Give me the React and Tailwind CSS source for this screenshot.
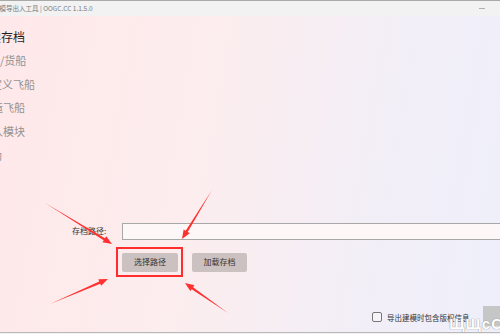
import React from "react";

const navItems = [
  { text: "读存档", active: true, ml: "-ml-[11px]" },
  { text: "客/货船", ml: "-ml-[11px]" },
  { text: "定义飞船", ml: "-ml-[9px]" },
  { text: "造飞船", ml: "-ml-[8px]" },
  { text: "入模块", ml: "-ml-[8px]" },
  { text: "助", ml: "-ml-[9px]" },
];

const arrows = [
  [45, 203, 112, 244],
  [212, 190, 182, 239],
  [50, 304, 108, 279],
  [228, 313, 185, 283],
];

// tapered red arrow, thin at the tail, head at the tip
const arrowPoints = ([tx, ty, px, py]) => {
  const len = Math.hypot(px - tx, py - ty);
  const dx = (px - tx) / len;
  const dy = (py - ty) / len;
  const nx = -dy;
  const ny = dx;
  const bx = px - dx * 9;
  const by = py - dy * 9;
  const pts = [
    [tx, ty],
    [bx + nx * 1.2, by + ny * 1.2],
    [bx + nx * 3.6, by + ny * 3.6],
    [px, py],
    [bx - nx * 3.6, by - ny * 3.6],
    [bx - nx * 1.2, by - ny * 1.2],
  ];
  return pts.map((p) => p.join(",")).join(" ");
};

const App = () => {
  return (
    <div className="relative w-[500px] h-[334px] overflow-hidden flex flex-col bg-[#f4f0f2] font-['Noto_Sans_CJK_SC','Liberation_Sans',sans-serif]">
      {/* title bar */}
      <div className="h-[16px] shrink-0 border-t border-[#a9a9a9] bg-[#f2f2f2] flex items-center justify-between">
        <span className="-ml-[7px] text-[6.5px] text-[#7a7a7a] whitespace-nowrap">
          建模导出入工具 | OOGC.CC 1.1.5.0
        </span>
        <span className="mr-[15px] w-[6px] h-[1px] bg-[#b0b0b0]"></span>
      </div>

      {/* main */}
      <div className="flex-1 flex flex-col border-b border-[#b8b8b8] mb-[1px] bg-[linear-gradient(100deg,#ffe8e9_0%,#fcedee_40%,#f3eef6_70%,#eeeffb_100%)]">
        <div className="pt-[9px] flex flex-col">
          {navItems.map((item, i) => (
            <div
              key={i}
              className={`h-[23.6px] flex items-center whitespace-nowrap ${item.ml} ${
                item.active
                  ? "text-[12px] text-[#1e1e1e]"
                  : "text-[11px] text-[#939393]"
              }`}
            >
              {item.text}
            </div>
          ))}
        </div>

        <div className="mt-[56px] flex items-center pl-[72px]">
          <span className="w-[50px] text-[8px] text-[#333]">存档路径:</span>
          <div className="flex-1 -mr-[10px] h-[17px] border border-[#a8a8a8] bg-[#fdf7f7]"></div>
        </div>

        <div className="mt-[13px] pl-[122px] flex gap-[14px]">
          <button className="w-[56px] h-[19px] rounded-[2px] bg-[#cbc1c0] text-[8px] text-[#333]">
            选择路径
          </button>
          <button className="w-[55px] h-[19px] rounded-[2px] bg-[#cbc1c0] text-[8px] text-[#333]">
            加载存档
          </button>
        </div>

        <div className="mt-auto mb-[9px] pl-[372px] flex items-center gap-[5px]">
          <span className="w-[10px] h-[10px] rounded-[2px] border border-[#777] bg-[#f6f4f8]"></span>
          <span className="text-[7.5px] text-[#333] whitespace-nowrap">导出建模时包含版权信息</span>
        </div>
      </div>

      {/* highlight box */}
      <div className="absolute left-[116px] top-[247px] w-[67px] h-[30px] border-2 border-[#ff2d2d]"></div>

      {/* arrows */}
      <svg className="absolute inset-0 pointer-events-none" width="500" height="334">
        {arrows.map((a, i) => (
          <polygon key={i} points={arrowPoints(a)} fill="#ff3030" />
        ))}
      </svg>

      {/* watermark */}
      <div className="absolute right-0 bottom-[8px] w-[17px] h-[20px] bg-[#c6c6c6]"></div>
      <div className="absolute -right-[3px] -bottom-[1px] text-[15px] font-bold text-white tracking-[1px] [text-shadow:0_0_1px_#999,0_0_1px_#999] font-['Liberation_Sans',sans-serif]">
        ЩЩcC
      </div>
    </div>
  );
};

export default App;
